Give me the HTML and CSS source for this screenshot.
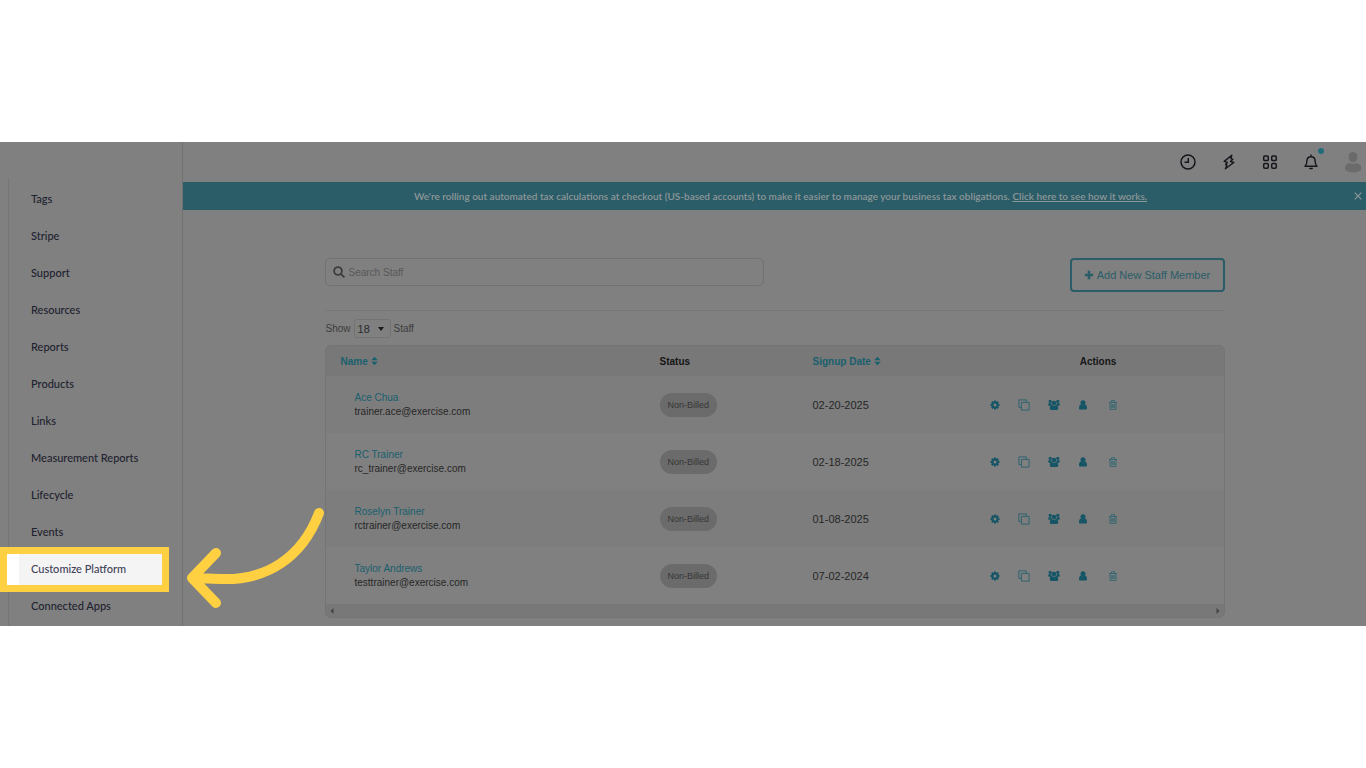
FILE: index.html
```html
<!DOCTYPE html>
<html lang="en">
<head>
  <meta charset="utf-8">
  <title>Staff</title>
  <link rel="stylesheet" href="styles.css">
</head>
<body>
  <!-- icons shared by the table rows -->
  <svg class="sprite" width="0" height="0" aria-hidden="true">
    <symbol id="icon-gear" viewBox="0 0 12 12">
      <g stroke="currentColor" stroke-width="2">
        <path d="M6 1.500v9M1.500 6h9M2.800 2.800l6.400 6.400M9.200 2.800l-6.400 6.400"/>
      </g>
      <circle cx="6" cy="6" r="3.600" fill="currentColor"/>
      <circle cx="6" cy="6" r="1.500" fill="#808080"/>
    </symbol>
    <symbol id="icon-copy" viewBox="0 0 12 12">
      <path d="M3 8.500H.9V.9h7.400V3M3.400 3.400h7.700v7.700H3.400z" fill="none" stroke="currentColor"/>
    </symbol>
    <symbol id="icon-group" viewBox="0 0 12 12">
      <g fill="currentColor">
        <circle cx="2.200" cy="2.300" r="1.600"/>
        <circle cx="9.800" cy="2.300" r="1.600"/>
        <circle cx="6" cy="4" r="2.300"/>
        <path d="M.2 6.200c0-1.600.5-2.200 1.200-2.200l1.800.3c0 1 .3 1.800 1 2.400H.8zM11.800 6.200c0-1.600-.5-2.200-1.200-2.200l-1.800.3c0 1-.3 1.800-1 2.400h3.400z"/>
        <path d="M1.800 9.600c0-2.200.6-3.500 1.800-3.500 1.500 1 3.300 1 4.800 0 1.200 0 1.800 1.300 1.800 3.500 0 .9-.5 1.400-1.300 1.400H3.100c-.8 0-1.300-.5-1.300-1.400z"/>
      </g>
    </symbol>
    <symbol id="icon-user" viewBox="0 0 12 12">
      <g fill="currentColor">
        <circle cx="6" cy="3.800" r="2.500"/>
        <path d="M2 9.100c0-2.200.8-3.500 2-3.700 1.200 1 2.800 1 4 0 1.200.2 2 1.500 2 3.700 0 1-.5 1.500-1.200 1.500H3.200C2.500 10.600 2 10.100 2 9.100z"/>
      </g>
    </symbol>
    <symbol id="icon-trash" viewBox="0 0 12 12">
      <path d="M2 3.500h8M4.500 3.300V1.700h3v1.600M3 3.500v6.900h6V3.500M4.800 5v4M6 5v4M7.200 5v4" fill="none" stroke="currentColor" stroke-width=".9"/>
    </symbol>
    <symbol id="icon-sort" viewBox="0 0 7 10">
      <path d="M.3 4.300L3.500.8l3.200 3.500zM.3 5.700h6.400L3.500 9.200z" fill="currentColor"/>
    </symbol>
  </svg>

  <div class="app">
    <nav class="sidebar">
      <ul class="menu">
        <li><a href="#">Tags</a></li>
        <li><a href="#">Stripe</a></li>
        <li><a href="#">Support</a></li>
        <li><a href="#">Resources</a></li>
        <li><a href="#">Reports</a></li>
        <li><a href="#">Products</a></li>
        <li><a href="#">Links</a></li>
        <li><a href="#">Measurement Reports</a></li>
        <li><a href="#">Lifecycle</a></li>
        <li><a href="#">Events</a></li>
        <li class="active">
          <span class="spotlight"></span>
          <a href="#">Customize Platform</a>
          <svg class="arrow" width="150" height="114" viewBox="0 0 150 114" aria-hidden="true">
            <path d="M137 13C120 58 84 81 38 79L12 78M34 53L10 78l24 25" fill="none" stroke="#ffd042" stroke-width="10" stroke-linecap="round" stroke-linejoin="round"/>
          </svg>
        </li>
        <li><a href="#">Connected Apps</a></li>
      </ul>
    </nav>

    <div class="main">
      <header class="topbar">
        <button aria-label="History">
          <svg width="16" height="16" viewBox="0 0 16 16"><g fill="none" stroke="currentColor" stroke-width="1.500"><circle cx="8" cy="8" r="7"/><path d="M8.300 4v4.300H4.500"/></g></svg>
        </button>
        <button aria-label="Quick actions">
          <svg width="16" height="16" viewBox="0 0 16 16"><path d="M10.800 1.200L3.200 7.400l3.200.9-1.800 2.200 1.300.5-1.500 3.800 8.400-6.300-3.300-1 2.300-2.300-1.900-.6z" fill="none" stroke="currentColor" stroke-width="1.400" stroke-linejoin="round"/></svg>
        </button>
        <button aria-label="Apps">
          <svg width="16" height="16" viewBox="0 0 16 16"><g fill="none" stroke="currentColor" stroke-width="1.500"><rect x="1.700" y="2" width="4.600" height="4.600" rx="1.200"/><rect x="9.700" y="2" width="4.600" height="4.600" rx="1.200"/><rect x="1.700" y="9.600" width="4.600" height="4.600" rx="1.200"/><rect x="9.700" y="9.600" width="4.600" height="4.600" rx="1.200"/></g></svg>
        </button>
        <button class="bell" aria-label="Notifications">
          <svg width="16" height="16" viewBox="0 0 16 16"><path d="M2 12.300c1.500-1.600 1.900-3 1.900-5.300 0-2.500 1.600-4.200 4.100-4.200s4.100 1.700 4.100 4.200c0 2.300.4 3.700 1.900 5.300zM8 2.800V1M6.800 14.500h2.400" fill="none" stroke="currentColor" stroke-width="1.400" stroke-linejoin="round" stroke-linecap="round"/></svg>
          <span class="dot"></span>
        </button>
        <button class="avatar" aria-label="Account">
          <svg width="18" height="22" viewBox="0 0 18 22"><g fill="currentColor"><ellipse cx="9" cy="6" rx="4.500" ry="5.300"/><path d="M1 17.500c0-3.300 2.500-5.200 5-5.200 2 1 4 1 6 0 2.500 0 5.300 1.900 5.300 5.200 0 2.700-3.500 3.700-8.200 3.700S1 20.200 1 17.500z"/></g></svg>
        </button>
      </header>

      <div class="banner">
        <p>We're rolling out automated tax calculations at checkout (US-based accounts) to make it easier to manage your business tax obligations. <a href="#">Click here to see how it works.</a></p>
        <button class="close" aria-label="Close">
          <svg width="8" height="8" viewBox="0 0 8 8"><path d="M.7.7l6.600 6.600M7.300.7L.7 7.300" stroke="currentColor" stroke-width="1.200"/></svg>
        </button>
      </div>

      <main class="content">
        <div class="toolbar">
          <div class="search">
            <svg width="12" height="12" viewBox="0 0 12 12"><g fill="none" stroke="currentColor" stroke-width="1.800"><circle cx="5" cy="5" r="3.900"/><path d="M7.800 7.800l3.600 3.600"/></g></svg>
            <input type="text" placeholder="Search Staff" aria-label="Search Staff">
          </div>
          <button class="add">
            <svg width="10" height="10" viewBox="0 0 10 10"><path d="M5 .8v8.400M.8 5h8.400" stroke="currentColor" stroke-width="2.600"/></svg>
            Add New Staff Member
          </button>
        </div>

        <div class="show">
          <label for="count">Show</label>
          <span class="select">
            <select id="count">
              <option>18</option>
            </select>
          </span>
          <span>Staff</span>
        </div>

        <div class="panel">
          <table>
            <colgroup>
              <col class="col-name">
              <col class="col-status">
              <col class="col-date">
              <col class="col-actions">
            </colgroup>
            <thead>
              <tr>
                <th><a href="#">Name <svg width="7" height="10"><use href="#icon-sort"/></svg></a></th>
                <th>Status</th>
                <th><a href="#">Signup Date <svg width="7" height="10"><use href="#icon-sort"/></svg></a></th>
                <th class="center">Actions</th>
              </tr>
            </thead>
            <tbody id="staff"></tbody>
          </table>
          <div class="scroller">
            <svg width="4" height="6" viewBox="0 0 4 6"><path d="M3.500 0v6L.5 3z" fill="currentColor"/></svg>
            <svg width="4" height="6" viewBox="0 0 4 6"><path d="M.5 0v6l3-3z" fill="currentColor"/></svg>
          </div>
        </div>
      </main>
    </div>
  </div>

  <script>
    const staff = [
      { name: "Ace Chua", email: "trainer.ace@exercise.com", date: "02-20-2025" },
      { name: "RC Trainer", email: "rc_trainer@exercise.com", date: "02-18-2025" },
      { name: "Roselyn Trainer", email: "rctrainer@exercise.com", date: "01-08-2025" },
      { name: "Taylor Andrews", email: "testtrainer@exercise.com", date: "07-02-2024" }
    ];
    const actions = [
      ["gear", "Settings"],
      ["copy", "Copy"],
      ["group", "Clients"],
      ["user", "Profile"],
      ["trash", "Delete"]
    ];

    // Every row gets the same set of action buttons
    const buttons = actions.map(([icon, label]) =>
      `<button class="${icon}" aria-label="${label}"><svg width="12" height="12"><use href="#icon-${icon}"/></svg></button>`
    ).join("");

    document.getElementById("staff").innerHTML = staff.map(person => `
      <tr>
        <td class="person"><a href="#">${person.name}</a><span>${person.email}</span></td>
        <td><span class="badge">Non-Billed</span></td>
        <td>${person.date}</td>
        <td><div class="actions">${buttons}</div></td>
      </tr>`).join("");
  </script>
</body>
</html>
```
FILE: styles.css
```css
* {
  box-sizing: border-box;
}

body {
  margin: 0;
  min-height: 100vh;
  display: flex;
  align-items: center;
  background: #fff;
  color: #262626;
  font-family: "Liberation Sans", Arial, sans-serif;
  font-size: 11px;
}

a {
  color: #195f6e;
  text-decoration: none;
}

button {
  margin: 0;
  padding: 0;
  border: none;
  background: none;
  color: inherit;
  font: inherit;
  cursor: pointer;
}

svg {
  display: block;
}

.sprite {
  position: absolute;
}

.app {
  display: flex;
  width: 100%;
  background: #808080;
}

/* sidebar */
.sidebar {
  flex: none;
  width: 183px;
  padding: 36px 0 0 8px;
  border-right: 1px solid #717171;
}

.menu {
  margin: 0;
  padding: 2px 0;
  border-left: 1px solid #757575;
  list-style: none;
}

.menu li {
  position: relative;
  height: 37px;
}

.menu a {
  position: relative;
  display: block;
  padding-left: 22px;
  color: #20222f;
  font: 500 11px/37px Lato, sans-serif;
}

.menu .active a {
  color: #3f4259;
}

.spotlight {
  position: absolute;
  top: -3px;
  left: -9px;
  width: 169px;
  height: 45px;
  border: 7px solid #ffd042;
  background: linear-gradient(to right, #fff 12px, #f4f4f4 12px);
}

.arrow {
  position: absolute;
  top: -50px;
  left: 173px;
  z-index: 1;
}

/* main column */
.main {
  flex: 1;
  min-width: 0;
}

.topbar {
  display: flex;
  align-items: center;
  justify-content: flex-end;
  gap: 25px;
  height: 40px;
  padding-right: 4px;
  color: #16171c;
}

.bell {
  position: relative;
}

.dot {
  position: absolute;
  top: -6px;
  right: -5px;
  width: 6px;
  height: 6px;
  border-radius: 50%;
  background: #236b7c;
}

.avatar {
  color: #6b6b6b;
}

.banner {
  display: flex;
  align-items: center;
  height: 28px;
  padding: 0 4px 0 24px;
  background: #2b5d68;
  color: #8b9698;
  font: 600 10px/14px Lato, sans-serif;
}

.banner p {
  flex: 1;
  margin: 0;
  text-align: center;
}

.banner a {
  color: inherit;
  text-decoration: underline;
}

.content {
  max-width: 900px;
  margin: 0 auto;
  padding: 48px 0 8px;
}

.toolbar {
  display: flex;
  align-items: flex-start;
  justify-content: space-between;
  padding-bottom: 18px;
  border-bottom: 1px solid #777;
}

.search {
  display: flex;
  align-items: center;
  gap: 4px;
  width: 439px;
  height: 28px;
  padding: 0 7px;
  border: 1px solid #727272;
  border-radius: 5px;
  color: #3c3c3c;
}

.search input {
  flex: 1;
  padding: 0;
  border: none;
  outline: none;
  background: none;
  color: #262626;
  font: inherit;
  font-size: 10px;
}

.search input::placeholder {
  color: #585858;
}

.add {
  display: flex;
  align-items: center;
  justify-content: center;
  gap: 3px;
  width: 155px;
  height: 34px;
  border: 2px solid #2b5d68;
  border-radius: 4px;
  color: #2b5d68;
}

.show {
  display: flex;
  align-items: center;
  gap: 3px;
  height: 34px;
  padding: 1px 1px 0;
  color: #3d3d3d;
  font-size: 10px;
}

.select {
  position: relative;
}

.select::after {
  content: "";
  position: absolute;
  top: 8px;
  right: 7px;
  border: 3px solid transparent;
  border-top: 4px solid #1a1a1a;
  border-bottom: none;
  pointer-events: none;
}

.select select {
  display: block;
  width: 37px;
  height: 19px;
  padding: 0 3px;
  border: 1px solid #747474;
  border-radius: 3px;
  appearance: none;
  background: none;
  color: #2b2b2b;
  font: 11px "Liberation Sans", Arial, sans-serif;
}

/* staff table */
.panel {
  overflow: hidden;
  border: 1px solid #747474;
  border-radius: 6px;
  background: #787878;
}

table {
  width: 100%;
  table-layout: fixed;
  border-collapse: collapse;
}

.col-name {
  width: 319px;
}

.col-status {
  width: 153px;
}

.col-date {
  width: 175px;
}

th,
td {
  padding: 0 15px;
  text-align: left;
}

th {
  height: 30px;
  color: #161616;
  font-size: 10px;
}

th a {
  display: flex;
  align-items: center;
  gap: 3px;
}

th.center {
  text-align: center;
}

td {
  height: 57px;
}

tbody tr {
  background: #808080;
}

tbody tr:nth-child(odd) {
  background: #7d7d7d;
}

.person {
  padding-left: 29px;
  font-size: 10px;
  line-height: 14px;
}

.person a,
.person span {
  display: block;
}

.badge {
  display: inline-block;
  padding: 0 8px;
  border-radius: 12px;
  background: #6b6b6b;
  color: #363636;
  font-size: 9px;
  line-height: 24px;
}

.actions {
  display: flex;
  justify-content: space-between;
  width: 131px;
  padding-left: 1px;
  color: #155566;
}

.actions .copy,
.actions .trash {
  color: #2e6470;
}

.scroller {
  display: flex;
  align-items: center;
  justify-content: space-between;
  height: 13px;
  padding: 0 4px;
  color: #444;
}
```
